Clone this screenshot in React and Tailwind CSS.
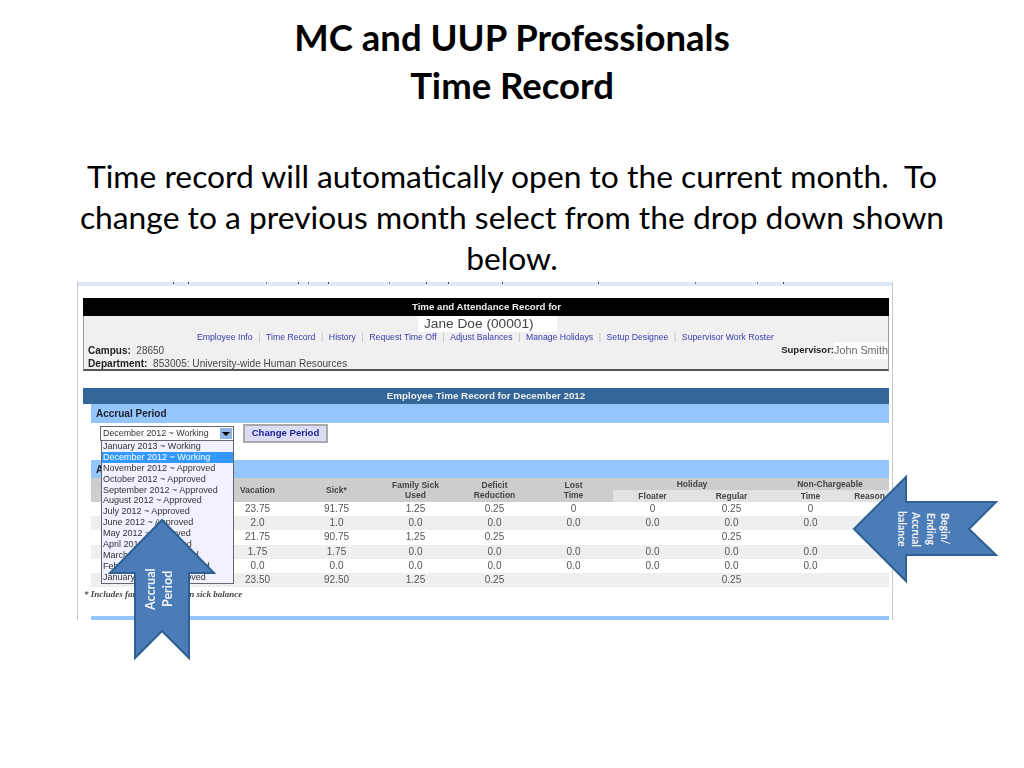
const links = [
    "Employee Info",
    "Time Record",
    "History",
    "Request Time Off",
    "Adjust Balances",
    "Manage Holidays",
    "Setup Designee",
    "Supervisor Work Roster",
];

const periods = [
    "January 2013 ~ Working",
    "December 2012 ~ Working",
    "November 2012 ~ Approved",
    "October 2012 ~ Approved",
    "September 2012 ~ Approved",
    "August 2012 ~ Approved",
    "July 2012 ~ Approved",
    "June 2012 ~ Approved",
    "May 2012 ~ Approved",
    "April 2012 ~ Approved",
    "March 2012 ~ Approved",
    "February 2012 ~ Approved",
    "January 2012 ~ Approved",
];

const rows = [
    ["23.75", "91.75", "1.25", "0.25", "0", "0", "0.25", "0"],
    ["2.0", "1.0", "0.0", "0.0", "0.0", "0.0", "0.0", "0.0"],
    ["21.75", "90.75", "1.25", "0.25", "", "", "0.25", ""],
    ["1.75", "1.75", "0.0", "0.0", "0.0", "0.0", "0.0", "0.0"],
    ["0.0", "0.0", "0.0", "0.0", "0.0", "0.0", "0.0", "0.0"],
    ["23.50", "92.50", "1.25", "0.25", "", "", "0.25", ""],
];

const colClass = "grid grid-cols-[127px_repeat(8,79px)_39px]";

const TimeRecordShot = () => {
    return (
        <div className="relative ml-[77px] mt-[3px] h-[338px] w-[816px] border-x border-x-[#c8c8c8] font-['Liberation_Sans',Arial,sans-serif] blur-[0.35px]">
            <div className="flex h-[4px] bg-[#dfe9f7]">
                <span className="ml-[95px] h-[2px] w-px bg-[#444]" />
                <span className="ml-[14px] h-[2px] w-px bg-[#444]" />
                <span className="ml-[77px] h-[2px] w-px bg-[#777]" />
                <span className="ml-[31px] h-[2px] w-px bg-[#444]" />
                <span className="ml-[9px] h-[2px] w-px bg-[#777]" />
                <span className="ml-[19px] h-[2px] w-px bg-[#444]" />
                <span className="ml-[60px] h-[2px] w-px bg-[#777]" />
                <span className="ml-[36px] h-[2px] w-px bg-[#444]" />
                <span className="ml-[21px] h-[2px] w-px bg-[#444]" />
                <span className="ml-[53px] h-[2px] w-px bg-[#444]" />
                <span className="ml-[95px] h-[2px] w-px bg-[#444]" />
                <span className="ml-[96px] h-[2px] w-px bg-[#777]" />
                <span className="ml-[61px] h-[2px] w-px bg-[#777]" />
                <span className="ml-[25px] h-[2px] w-px bg-[#444]" />
            </div>

            <div className="ml-[5px] mr-[3px] mt-[12px]">
                <div className="flex h-[18px] items-center justify-center bg-black pl-[1px] text-[9.7px] font-bold text-[#eee]">
                    Time and Attendance Record for
                </div>
                <div className="h-[55px] border-x border-b-2 border-x-[#999] border-b-[#555] bg-[#f0f0f0]">
                    <div className="ml-[334px] flex h-[16px] w-[139px] items-center bg-white pl-[6px] text-[13.7px] text-[#444]">
                        Jane Doe (00001)
                    </div>
                    <div className="ml-[113px] flex h-[12px] items-center text-[8.7px] text-[#3a3ab0]">
                        {links.map((link, i) => (
                            <span key={link} className="flex items-center">
                                {i > 0 && <span className="mx-[5.6px] text-[#bbb]">|</span>}
                                {link}
                            </span>
                        ))}
                    </div>
                    <div className="flex h-[13px] items-center justify-between pl-[4px] text-[10px] text-[#444]">
                        <span>
                            <b className="text-[#222]">Campus:</b>&nbsp; 28650
                        </span>
                        <span className="flex items-center">
                            <b className="text-[9.5px] text-[#222]">Supervisor:</b>
                            <span className="w-[54px] whitespace-nowrap bg-white text-[10.8px] text-[#666]">John Smith</span>
                        </span>
                    </div>
                    <div className="flex h-[13px] items-center pl-[4px] text-[10.1px] text-[#444]">
                        <b className="text-[#222]">Department:</b>&nbsp; 853005: University-wide Human Resources
                    </div>
                </div>
            </div>

            <div className="ml-[5px] mr-[3px] mt-[17px]">
                <div className="flex h-[16px] items-center justify-center bg-[#336699] text-[9.8px] font-bold text-[#eee]">
                    Employee Time Record for December 2012
                </div>
            </div>

            <div className="ml-[13px] mr-[3px]">
                <div className="flex h-[19px] items-center bg-[#94c6fb] pl-[5px] text-[10px] font-bold text-[#223]">
                    Accrual Period
                </div>
                <div className="flex h-[37px] items-start gap-[9px] pt-[1px] pl-[9px]">
                    <div className="mt-[2px] flex h-[15px] w-[134px] items-center justify-between border border-[#666] bg-white pl-[2px] text-[8.9px] text-[#333]">
                        December 2012 ~ Working
                        <span className="mr-[1px] flex h-[11px] w-[12px] items-center justify-center bg-[#8fb4e8]">
                            <span className="h-0 w-0 border-x-[4px] border-t-[4px] border-x-transparent border-t-black" />
                        </span>
                    </div>
                    <div className="flex h-[19px] w-[85px] items-center justify-center border-2 border-[#aaa] bg-[#dcdcf4] text-[9.6px] font-bold text-[#22229a]">
                        Change Period
                    </div>
                </div>
                <div className="flex h-[18px] items-center bg-[#94c6fb] pl-[5px] text-[10px] font-bold text-[#223]">
                    Accrual Balances
                </div>

                <div className={`${colClass} bg-[#cdcdcd] text-center text-[8.5px] font-bold leading-[10.5px] text-[#444]`}>
                    <div className="row-span-2" />
                    <div className="row-span-2 self-center">Vacation</div>
                    <div className="row-span-2 self-center">Sick*</div>
                    <div className="row-span-2 self-center">Family Sick<br />Used</div>
                    <div className="row-span-2 self-center">Deficit<br />Reduction</div>
                    <div className="row-span-2 self-center">Lost<br />Time</div>
                    <div className="col-span-2 flex h-[12px] items-center justify-center">Holiday</div>
                    <div className="col-span-2 flex h-[12px] items-center justify-center">Non-Chargeable</div>
                    <div className="flex h-[12px] items-center justify-center bg-[#e2e2e2]">Floater</div>
                    <div className="flex h-[12px] items-center justify-center bg-[#e2e2e2]">Regular</div>
                    <div className="flex h-[12px] items-center justify-center bg-[#e2e2e2]">Time</div>
                    <div className="flex h-[12px] items-center justify-center whitespace-nowrap bg-[#e2e2e2]">Reason</div>
                </div>

                {rows.map((row, i) => (
                    <div
                        key={i}
                        className={`${colClass} h-[14.2px] items-center text-center text-[10px] leading-[14px] text-[#555] ${
                            i % 2 === 1 ? "bg-[#efefef]" : "bg-white"
                        }`}
                    >
                        <div />
                        {row.map((val, j) => (
                            <div key={j}>{val}</div>
                        ))}
                    </div>
                ))}
            </div>

            <div className="ml-[6px] mt-[1px] h-[28px] font-['Liberation_Serif',serif] text-[9px] font-bold italic leading-[12px] text-[#444]">
                * Includes family sick used in sick balance
            </div>
            <div className="ml-[13px] mr-[3px] h-[4px] bg-[#94c6fb]" />

            {/* open drop down sits over the table */}
            <div className="absolute left-[23px] top-[158px] w-[133px] border border-[#666] bg-[#f1f1ff] text-[9px] leading-[11px] text-[#333]">
                {periods.map((period, i) => (
                    <div
                        key={i}
                        className={`h-[10.9px] whitespace-nowrap pl-[1px] ${i === 1 ? "bg-[#3399ff] text-white" : ""}`}
                    >
                        {period}
                    </div>
                ))}
            </div>
        </div>
    );
};

const App = () => {
    return (
        <div className="relative h-[768px] w-[1024px] overflow-hidden bg-white font-['Lato','Carlito',sans-serif] text-black">
            <div className="pt-[13px] text-center text-[36.5px] font-bold leading-[48px]">
                MC and UUP Professionals
                <br />
                Time Record
            </div>
            <div className="mt-[47px] whitespace-pre-wrap text-center text-[31.8px] leading-[41px]">
                {"Time record will automatically open to the current month.  To"}
                <br />
                change to a previous month select from the drop down shown
                <br />
                below.
            </div>

            <TimeRecordShot />

            {/* callout arrows lying over the screenshot */}
            <div className="absolute left-[107px] top-[517px] h-[144px] w-[110px]">
                <svg width="110" height="144" viewBox="107 517 110 144">
                    <path
                        d="M162 520 L214 573 L189 573 L189 658 L162 631 L135 658 L135 573 L110 573 Z"
                        fill="#4a7cb8"
                        stroke="#2f5f93"
                        strokeWidth="2"
                    />
                </svg>
                <div className="absolute left-[34px] top-[48px] flex h-[48px] w-[36px] rotate-180 items-center justify-center text-center text-[12.5px] font-bold leading-[17px] text-[#f2f2f2] [writing-mode:vertical-rl]">
                    Accrual
                    <br />
                    Period
                </div>
            </div>

            <div className="absolute left-[851px] top-[474px] h-[110px] w-[148px]">
                <svg width="148" height="110" viewBox="851 474 148 110">
                    <path
                        d="M854 529 L906 477 L906 502 L996 502 L969 529 L996 555 L906 555 L906 581 Z"
                        fill="#4a7cb8"
                        stroke="#2f5f93"
                        strokeWidth="2"
                    />
                </svg>
                <div className="absolute left-[42px] top-[30px] flex h-[50px] w-[60px] items-center justify-center text-center text-[10.5px] font-bold leading-[14.5px] text-[#f2f2f2] [writing-mode:vertical-rl]">
                    Begin/
                    <br />
                    Ending
                    <br />
                    Accrual
                    <br />
                    balance
                </div>
            </div>
        </div>
    );
};

export default App;
